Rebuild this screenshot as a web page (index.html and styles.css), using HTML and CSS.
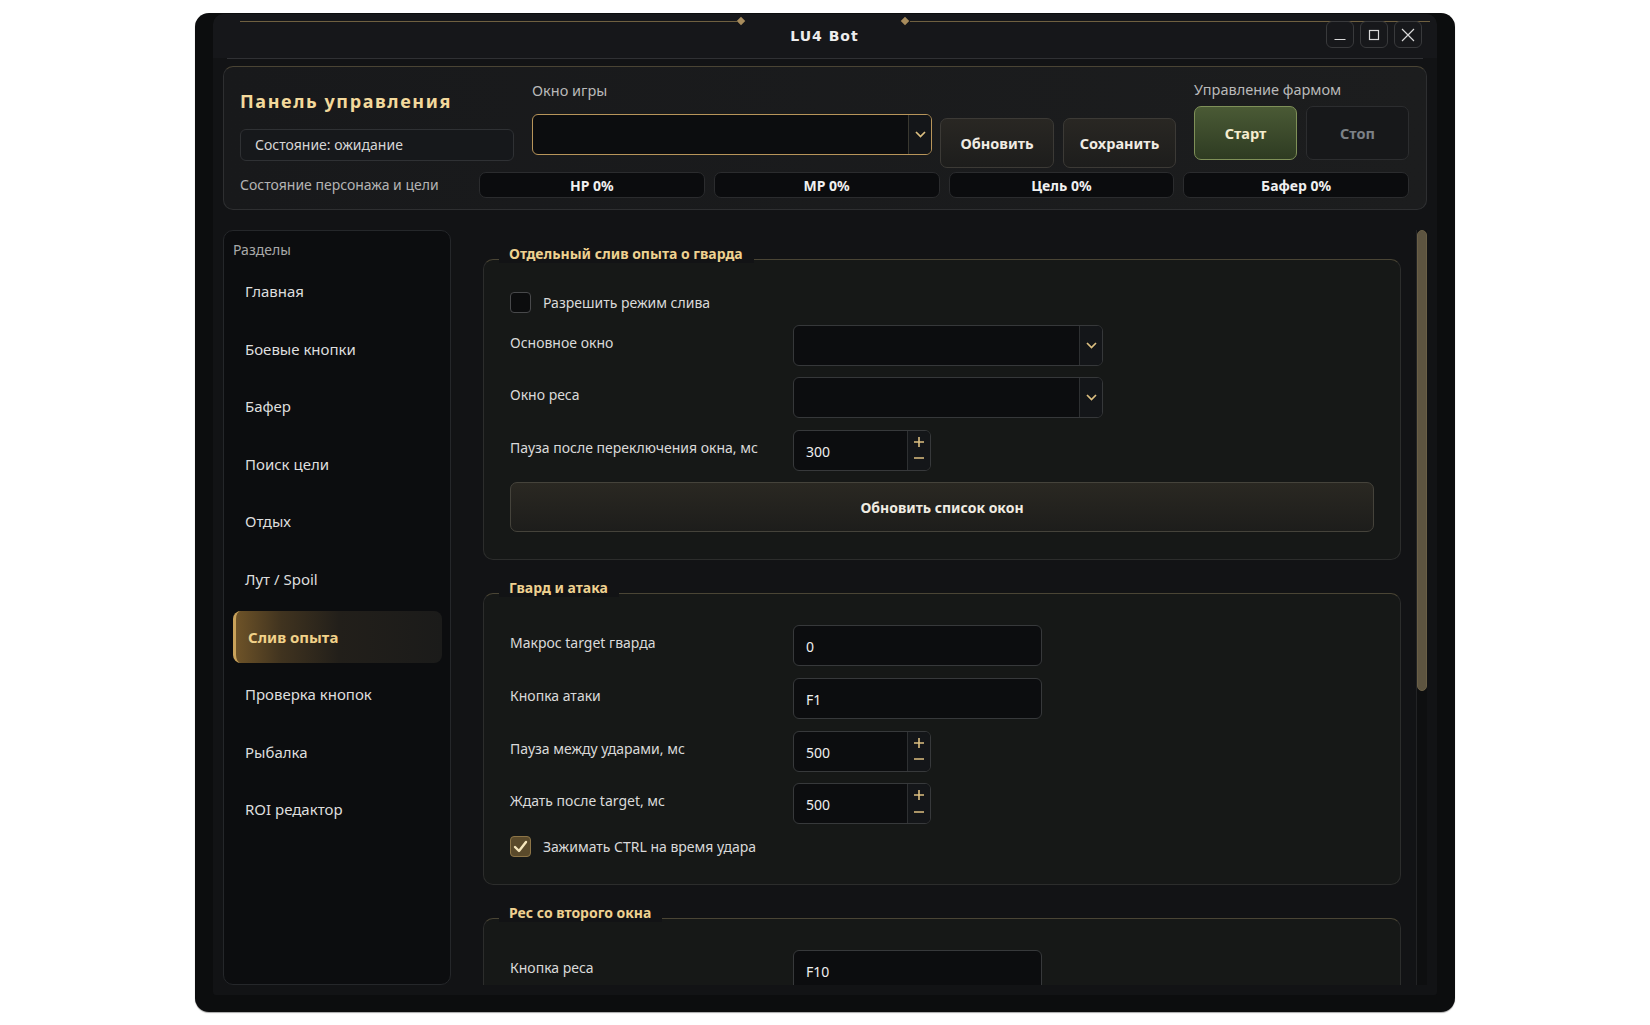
FILE: index.html
```html
<!DOCTYPE html>
<html lang="ru">
<head>
<meta charset="utf-8">
<title>LU4 Bot</title>
<link rel="stylesheet" href="styles.css">
</head>
<body>
<div class="window">
  <div class="inner">
    <div class="titlebar">
      <div class="deco deco-left"></div>
      <div class="diamond diamond-left"></div>
      <div class="diamond diamond-right"></div>
      <div class="deco deco-right"></div>
      <div class="tb-spacer"></div>
      <div class="title">LU4 Bot</div>
      <div class="win-btns">
        <div class="win-btn"><svg width="12" height="12" viewBox="0 0 12 12"><path d="M0.5 10.5H11.5" stroke="#d9d9d9" stroke-width="1.2"/></svg></div>
        <div class="win-btn"><svg width="12" height="12" viewBox="0 0 12 12"><rect x="1.5" y="1.5" width="9" height="9" fill="none" stroke="#d9d9d9" stroke-width="1.2"/></svg></div>
        <div class="win-btn"><svg width="14" height="14" viewBox="0 0 14 14"><path d="M1 1L13 13M13 1L1 13" stroke="#d9d9d9" stroke-width="1.2"/></svg></div>
      </div>
    </div>
    <div class="title-sep"></div>

    <div class="panel">
      <div class="panel-row1">
        <div class="col-a">
          <div class="panel-title">Панель управления</div>
          <div class="status-box">Состояние: ожидание</div>
        </div>
        <div class="col-b">
          <div class="muted-label">Окно игры</div>
          <div class="combo combo-gold">
            <div class="combo-text"></div>
            <div class="combo-arrow"><svg width="11" height="7" viewBox="0 0 11 7"><path d="M1 1L5.5 5.5L10 1" fill="none" stroke="#dcbf80" stroke-width="1.7"/></svg></div>
          </div>
        </div>
        <div class="btn btn-refresh">Обновить</div>
        <div class="btn btn-save">Сохранить</div>
        <div class="col-farm">
          <div class="muted-label">Управление фармом</div>
          <div class="farm-btns">
            <div class="btn-start">Старт</div>
            <div class="btn-stop">Стоп</div>
          </div>
        </div>
      </div>
      <div class="panel-row2">
        <div class="stats-label">Состояние персонажа и цели</div>
        <div class="stat">HP 0%</div>
        <div class="stat">MP 0%</div>
        <div class="stat">Цель 0%</div>
        <div class="stat">Бафер 0%</div>
      </div>
    </div>

    <div class="main">
      <aside class="sidebar">
        <div class="sidebar-head">Разделы</div>
        <div class="nav">
          <div class="nav-item">Главная</div>
          <div class="nav-item">Боевые кнопки</div>
          <div class="nav-item">Бафер</div>
          <div class="nav-item">Поиск цели</div>
          <div class="nav-item">Отдых</div>
          <div class="nav-item">Лут / Spoil</div>
          <div class="nav-item active">Слив опыта</div>
          <div class="nav-item">Проверка кнопок</div>
          <div class="nav-item">Рыбалка</div>
          <div class="nav-item">ROI редактор</div>
        </div>
      </aside>

      <div class="content">
        <div class="scroll">
          <section class="group group-first">
            <div class="group-title">Отдельный слив опыта о гварда</div>
            <div class="rows">
              <div class="check-row">
                <div class="checkbox"></div>
                <div class="check-label">Разрешить режим слива</div>
              </div>
              <div class="row">
                <div class="row-label">Основное окно</div>
                <div class="combo combo-field">
                  <div class="combo-text"></div>
                  <div class="combo-arrow"><svg width="11" height="7" viewBox="0 0 11 7"><path d="M1 1L5.5 5.5L10 1" fill="none" stroke="#dcbf80" stroke-width="1.7"/></svg></div>
                </div>
              </div>
              <div class="row">
                <div class="row-label">Окно реса</div>
                <div class="combo combo-field">
                  <div class="combo-text"></div>
                  <div class="combo-arrow"><svg width="11" height="7" viewBox="0 0 11 7"><path d="M1 1L5.5 5.5L10 1" fill="none" stroke="#dcbf80" stroke-width="1.7"/></svg></div>
                </div>
              </div>
              <div class="row">
                <div class="row-label">Пауза после переключения окна, мс</div>
                <div class="spin">
                  <div class="spin-value">300</div>
                  <div class="spin-btns">
                    <svg width="10" height="10" viewBox="0 0 10 10"><path d="M5 0V10M0 5H10" stroke="#dcbf80" stroke-width="1.6"/></svg>
                    <svg width="10" height="10" viewBox="0 0 10 10"><path d="M0 5H10" stroke="#dcbf80" stroke-width="1.6"/></svg>
                  </div>
                </div>
              </div>
              <div class="wide-btn">Обновить список окон</div>
            </div>
          </section>

          <section class="group">
            <div class="group-title">Гвард и атака</div>
            <div class="rows">
              <div class="row">
                <div class="row-label">Макрос target гварда</div>
                <div class="input">0</div>
              </div>
              <div class="row">
                <div class="row-label">Кнопка атаки</div>
                <div class="input">F1</div>
              </div>
              <div class="row">
                <div class="row-label">Пауза между ударами, мс</div>
                <div class="spin">
                  <div class="spin-value">500</div>
                  <div class="spin-btns">
                    <svg width="10" height="10" viewBox="0 0 10 10"><path d="M5 0V10M0 5H10" stroke="#dcbf80" stroke-width="1.6"/></svg>
                    <svg width="10" height="10" viewBox="0 0 10 10"><path d="M0 5H10" stroke="#dcbf80" stroke-width="1.6"/></svg>
                  </div>
                </div>
              </div>
              <div class="row">
                <div class="row-label">Ждать после target, мс</div>
                <div class="spin">
                  <div class="spin-value">500</div>
                  <div class="spin-btns">
                    <svg width="10" height="10" viewBox="0 0 10 10"><path d="M5 0V10M0 5H10" stroke="#dcbf80" stroke-width="1.6"/></svg>
                    <svg width="10" height="10" viewBox="0 0 10 10"><path d="M0 5H10" stroke="#dcbf80" stroke-width="1.6"/></svg>
                  </div>
                </div>
              </div>
              <div class="check-row">
                <div class="checkbox checked"><svg width="15" height="13" viewBox="0 0 15 13"><path d="M2 7L6 11L13 2" fill="none" stroke="#f6e7bd" stroke-width="2.4" stroke-linecap="round" stroke-linejoin="round"/></svg></div>
                <div class="check-label">Зажимать CTRL на время удара</div>
              </div>
            </div>
          </section>

          <section class="group">
            <div class="group-title">Рес со второго окна</div>
            <div class="rows">
              <div class="row">
                <div class="row-label">Кнопка реса</div>
                <div class="input">F10</div>
              </div>
            </div>
          </section>
        </div>
        <div class="track"><div class="thumb"></div></div>
      </div>
    </div>
  </div>
</div>
</body>
</html>
```

FILE: styles.css
```css
* { box-sizing: border-box; }

html, body {
  margin: 0;
  padding: 0;
  background: #ffffff;
}

body {
  width: 1650px;
  height: 1025px;
  font-family: "Noto Sans", "Liberation Sans", sans-serif;
  font-size: 14px;
  color: #d8d8d8;
  overflow: hidden;
}

.window {
  margin: 13px 0 0 195px;
  width: 1260px;
  height: 999px;
  background: #0c0d0e;
  border-radius: 14px;
  padding: 1px 18px 17px 18px;
  box-shadow: 0 1px 1px rgba(0,0,0,0.35);
}

.inner {
  height: 981px;
  background: #121315;
  border-radius: 10px 10px 3px 3px;
  overflow: hidden;
  display: flex;
  flex-direction: column;
}

/* ---------- title bar ---------- */
.titlebar {
  position: relative;
  height: 44px;
  background: #16171a;
  border-radius: 10px 10px 0 0;
  display: grid;
  grid-template-columns: 1fr auto 1fr;
  align-items: center;
  padding: 0 15px 0 14px;
  flex: none;
}

.deco {
  position: absolute;
  top: 7px;
  height: 1px;
  background: #6f6040;
}
.deco-left { left: 27px; width: 497px; }
.deco-right { left: 697px; width: 520px; }

.diamond {
  position: absolute;
  top: 4px;
  width: 6px;
  height: 6px;
  background: #a88c5c;
  transform: rotate(45deg);
}
.diamond-left { left: 525px; }
.diamond-right { left: 689px; }

.title {
  font-family: "DejaVu Sans", "Noto Sans", sans-serif;
  font-weight: bold;
  font-size: 14px;
  letter-spacing: 1px;
  color: #ededed;
  position: relative;
}

.win-btns {
  justify-self: end;
  align-self: start;
  margin-top: 7px;
  display: flex;
  gap: 6px;
  position: relative;
  z-index: 1;
}

.win-btn {
  width: 28px;
  height: 27px;
  border: 1px solid #393a3c;
  border-radius: 6px;
  background: #17181b;
  display: flex;
  align-items: center;
  justify-content: center;
}

.title-sep {
  height: 1px;
  margin: 0 14px;
  background: #303134;
  flex: none;
}

/* ---------- control panel ---------- */
.panel {
  flex: none;
  margin: 7px 10px 0;
  height: 144px;
  border: 1px solid #2e2f31;
  border-top-color: #4a4434;
  border-radius: 10px;
  background: linear-gradient(90deg, #18191b 0%, #1c1d1e 100%);
  padding: 0 17px 0 16px;
}

.panel-row1 {
  display: flex;
  height: 101px;
}

.col-a {
  width: 274px;
  padding-top: 22px;
}

.panel-title {
  font-weight: bold;
  font-size: 18px;
  line-height: 24px;
  letter-spacing: 1.6px;
  color: #f3d99c;
}

.status-box {
  margin-top: 16px;
  height: 32px;
  border: 1px solid #2f3134;
  border-radius: 6px;
  background: #16181b;
  padding-left: 14px;
  line-height: 30px;
  font-size: 14px;
  color: #d6d6d6;
}

.col-b {
  width: 400px;
  margin-left: 18px;
  padding-top: 13px;
}

.muted-label {
  font-size: 14.5px;
  line-height: 20px;
  color: #b9b9b9;
}

.combo {
  display: flex;
  height: 41px;
  border: 1px solid #36383a;
  border-radius: 6px;
  background: #0c0d0f;
  overflow: hidden;
}
.combo-gold {
  margin-top: 14px;
  border-color: #b8955a;
}
.combo-text { flex: 1; }
.combo-arrow {
  width: 23px;
  border-left: 1px solid #2e3032;
  background: #141619;
  display: flex;
  align-items: center;
  justify-content: center;
}
.combo-gold .combo-arrow { border-left-color: #3a3830; }

.btn {
  margin-top: 51px;
  height: 50px;
  border: 1px solid #3c3a36;
  border-radius: 7px;
  background: linear-gradient(180deg, #292723 0%, #1d1d1c 100%);
  display: flex;
  align-items: center;
  justify-content: center;
  font-weight: bold;
  font-size: 14.5px;
  color: #f0ece4;
}
.btn-refresh { width: 114px; margin-left: 8px; }
.btn-save { width: 113px; margin-left: 9px; }

.col-farm {
  width: 215px;
  margin-left: 18px;
  padding-top: 12px;
}

.farm-btns {
  margin-top: 7px;
  display: flex;
  gap: 9px;
}

.btn-start, .btn-stop {
  height: 54px;
  border-radius: 7px;
  display: flex;
  align-items: center;
  justify-content: center;
  font-weight: bold;
  font-size: 14.5px;
}
.btn-start {
  width: 103px;
  border: 1px solid #7f9058;
  background: linear-gradient(180deg, #4a5a35 0%, #2e3b22 100%);
  color: #f5edcf;
}
.btn-stop {
  width: 103px;
  border: 1px solid #2c2d2f;
  background: #17181a;
  color: #7c8186;
}

.panel-row2 {
  margin-top: 4px;
  display: flex;
  gap: 9px;
  height: 26px;
}

.stats-label {
  width: 230px;
  font-size: 14px;
  line-height: 26px;
  color: #b4b4b4;
}

.stat {
  flex: 1;
  border: 1px solid #2b2c2e;
  border-radius: 7px;
  background: #0b0c0e;
  display: flex;
  align-items: center;
  justify-content: center;
  font-weight: bold;
  font-size: 14px;
  color: #f0f0f0;
}

/* ---------- main area ---------- */
.main {
  flex: none;
  height: 755px;
  margin: 20px 10px 0;
  display: flex;
}

.sidebar {
  width: 228px;
  flex: none;
  border: 1px solid #25272a;
  border-radius: 10px;
  background: #0c0d0f;
  padding: 9px 8px 0 9px;
}

.sidebar-head {
  font-size: 14px;
  line-height: 20px;
  color: #a9a9a9;
}

.nav {
  margin-top: 5px;
  display: flex;
  flex-direction: column;
  gap: 5.6px;
}

.nav-item {
  height: 52px;
  padding-left: 12px;
  display: flex;
  align-items: center;
  font-size: 15px;
  color: #dedede;
  border-radius: 8px;
}

.nav-item.active {
  border-left: 3px solid #c9a25a;
  background: linear-gradient(90deg, #6e5328 0%, #40331f 22%, #221f1a 50%, #1b1b1a 100%);
  font-weight: bold;
  color: #f1d189;
}

.content {
  flex: 1;
  display: flex;
}

.scroll {
  flex: 1;
  overflow: hidden;
  padding: 0 15px 0 32px;
}

.track {
  width: 11px;
  flex: none;
  background: #0e0f10;
  border-left: 1px solid #222325;
}

.thumb {
  width: 10px;
  height: 461px;
  border-radius: 5px;
  background: #5d5440;
  border: 1px solid #6a5f46;
}

/* ---------- group boxes ---------- */
.group {
  margin-top: 33px;
  border: 1px solid #2c2d2c;
  border-top-color: #4a4535;
  border-radius: 10px;
  background: #161817;
  padding: 0 26px 26px 26px;
  display: flex;
  flex-direction: column;
}
.group-first {
  margin-top: 29px;
  padding-bottom: 27px;
}

.group-title {
  align-self: flex-start;
  margin: -16px 0 0 -11px;
  padding: 0 11px 0 10px;
  background: #121315;
  font-weight: bold;
  font-size: 14px;
  line-height: 19px;
  color: #eed190;
}

.rows {
  margin-top: 28px;
  display: flex;
  flex-direction: column;
  gap: 11.6px;
}

.row {
  display: flex;
  align-items: center;
  height: 41px;
}

.row-label {
  width: 283px;
  flex: none;
  font-size: 14px;
  color: #dadada;
  padding-bottom: 6px;
}

.combo-field { width: 310px; }

.input {
  width: 249px;
  height: 41px;
  border: 1px solid #37393b;
  border-radius: 6px;
  background: #0c0d0f;
  padding-left: 12px;
  line-height: 41px;
  font-size: 14px;
  color: #efefef;
}

.spin {
  width: 138px;
  height: 41px;
  border: 1px solid #37393b;
  border-radius: 6px;
  background: #0c0d0f;
  display: flex;
  overflow: hidden;
}
.spin-value {
  flex: 1;
  padding-left: 12px;
  line-height: 41px;
  font-size: 14px;
  color: #efefef;
}
.spin-btns {
  width: 23px;
  border-left: 1px solid #2e3032;
  background: #141619;
  display: flex;
  flex-direction: column;
  align-items: center;
  justify-content: space-evenly;
}

.check-row {
  display: flex;
  align-items: center;
  height: 22px;
}

.checkbox {
  width: 21px;
  height: 21px;
  border: 1px solid #48494b;
  border-radius: 4px;
  background: #0c0d0e;
  display: flex;
  align-items: center;
  justify-content: center;
}
.checkbox.checked {
  background: #5a4a2b;
  border-color: #8d7547;
}

.check-label {
  margin-left: 12px;
  font-size: 14px;
  color: #dadada;
}

.wide-btn {
  height: 50px;
  border: 1px solid #45433b;
  border-radius: 7px;
  background: linear-gradient(180deg, #2a2822 0%, #1d1d1b 100%);
  display: flex;
  align-items: center;
  justify-content: center;
  font-weight: bold;
  font-size: 14px;
  color: #f0ece2;
}
```
